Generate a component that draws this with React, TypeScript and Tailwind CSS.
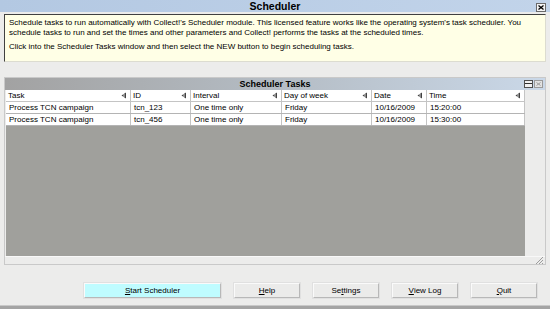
import React from 'react';

const columns = [
    { label: 'Task', width: 125 },
    { label: 'ID', width: 60 },
    { label: 'Interval', width: 91 },
    { label: 'Day of week', width: 90 },
    { label: 'Date', width: 55 },
    { label: 'Time', width: 98 },
];

const rows = [
    ['Process TCN campaign', 'tcn_123', 'One time only', 'Friday', '10/16/2009', '15:20:00'],
    ['Process TCN campaign', 'tcn_456', 'One time only', 'Friday', '10/16/2009', '15:30:00'],
];

const SortArrow = () => (
    <svg width="6" height="7" viewBox="0 0 6 7" className="shrink-0">
        <path d="M5 0.5 L0.5 3.5 L5 6.5 Z" fill="#404040" />
        <path d="M3 2 L3 5" stroke="#ffffff" strokeWidth="0.8" />
    </svg>
);

const WinButton = ({ children, wide, cyan }: { children: React.ReactNode; wide?: boolean; cyan?: boolean }) => (
    <button
        className={`h-[15px] ${wide ? 'w-[137px]' : 'w-[66px]'} ${cyan ? 'bg-[#bffcff]' : 'bg-[#ebebea]'} border border-t-[#fafafa] border-l-[#fafafa] border-r-[#b8b8b8] border-b-[#b8b8b8] shadow-[0_0_0_1px_#e0e0e0] flex items-center justify-center leading-none text-[8px] text-black`}
    >
        {children}
    </button>
);

const App = () => {
    return (
        <div className="w-[550px] h-[309px] bg-[#ececeb] flex flex-col overflow-hidden text-[8px] text-black font-['Liberation_Sans',Arial,sans-serif]">
            {/* Title bar */}
            <div className="h-[12px] bg-gradient-to-r from-[#b3c8e2] to-[#c2d4ea] flex items-center relative">
                <div className="flex-1 text-center font-bold text-[10.5px] leading-none">Scheduler</div>
                <div className="absolute right-[4px] top-[3px] w-[10px] h-[9px] bg-[#f4f4f4] border border-[#6a6a6a] flex items-center justify-center">
                    <svg width="6" height="5" viewBox="0 0 6 5">
                        <path d="M0.5 0.5 L5.5 4.5 M5.5 0.5 L0.5 4.5" stroke="#000" strokeWidth="1.3" />
                    </svg>
                </div>
            </div>

            {/* Info box */}
            <div className="mt-[2px] mx-[4px] h-[48px] bg-[#ffffe6] border border-t-[#404040] border-l-[#404040] border-r-[#dcdcd0] border-b-[#dcdcd0] px-[4px] pt-[3px] leading-[10px]">
                <p>Schedule tasks to run automatically with Collect!'s Scheduler module. This licensed feature works like the operating system's task scheduler. You schedule tasks to run and set the times and other parameters and Collect! performs the tasks at the scheduled times.</p>
                <p className="mt-[4px]">Click into the Scheduler Tasks window and then select the NEW button to begin scheduling tasks.</p>
            </div>

            {/* Scheduler Tasks panel */}
            <div className="mt-[15px] mx-[4px] h-[188px] border border-[#c9c9c9] bg-[#ececeb] flex flex-col">
                <div className="h-[12px] bg-gradient-to-r from-[#a2a2a2] via-[#b4bcc4] to-[#cad8e8] flex items-center relative">
                    <div className="flex-1 text-center font-bold text-[9px] leading-none">Scheduler Tasks</div>
                    <div className="absolute right-[12px] top-[2px] w-[9px] h-[8px] bg-[#f0f0f0] border border-[#505050] flex items-start">
                        <div className="w-full h-[3px] border-b border-[#303030]" />
                    </div>
                    <div className="absolute right-[2px] top-[2px] w-[9px] h-[8px] bg-[#e2e2e2] border border-[#9a9a9a] flex items-center justify-center">
                        <svg width="5" height="4" viewBox="0 0 5 4">
                            <path d="M0.5 0.5 L4.5 3.5 M4.5 0.5 L0.5 3.5" stroke="#9a9a9a" strokeWidth="1" />
                        </svg>
                    </div>
                </div>

                <div className="flex-1 flex">
                    <div className="w-[519px] ml-[1px] flex flex-col">
                        {/* Header row */}
                        <div className="h-[12px] flex bg-white border-b border-[#c4c4c4]">
                            {columns.map((col) => (
                                <div key={col.label} style={{ width: col.width }} className="h-full flex items-center justify-between pl-[2px] pr-[3px] border-r border-[#c4c4c4] leading-none">
                                    <span>{col.label}</span>
                                    <SortArrow />
                                </div>
                            ))}
                        </div>
                        {rows.map((row, i) => (
                            <div key={i} className="h-[12px] flex bg-white border-b border-[#b4b4b4]">
                                {row.map((cell, j) => (
                                    <div key={j} style={{ width: columns[j].width }} className="h-full flex items-center pl-[3px] border-r border-[#c4c4c4] leading-none">
                                        {cell}
                                    </div>
                                ))}
                            </div>
                        ))}
                        <div className="flex-1 bg-[#a0a09c]" />
                    </div>
                    <div className="flex-1" />
                </div>

                <div className="h-[8px] flex justify-end items-end border-t border-[#f8f8f8]">
                    <svg width="9" height="8" viewBox="0 0 9 8" className="mr-[1px]">
                        <path d="M8 1 L1 8 M8 4 L4 8 M8 7 L7 8" stroke="#9c9c9c" strokeWidth="1" />
                    </svg>
                </div>
            </div>

            {/* Buttons */}
            <div className="mt-[18px] flex justify-end gap-[13px] pr-[13px]">
                <WinButton wide cyan><span className="underline">S</span>tart Scheduler</WinButton>
                <WinButton><span className="underline">H</span>elp</WinButton>
                <WinButton>Se<span className="underline">t</span>tings</WinButton>
                <WinButton><span className="underline">V</span>iew Log</WinButton>
                <WinButton><span className="underline">Q</span>uit</WinButton>
            </div>

            <div className="mt-auto h-[4px] bg-[#a4a4a4] border-t border-[#c8c8c8]" />
        </div>
    );
};

export default App;
